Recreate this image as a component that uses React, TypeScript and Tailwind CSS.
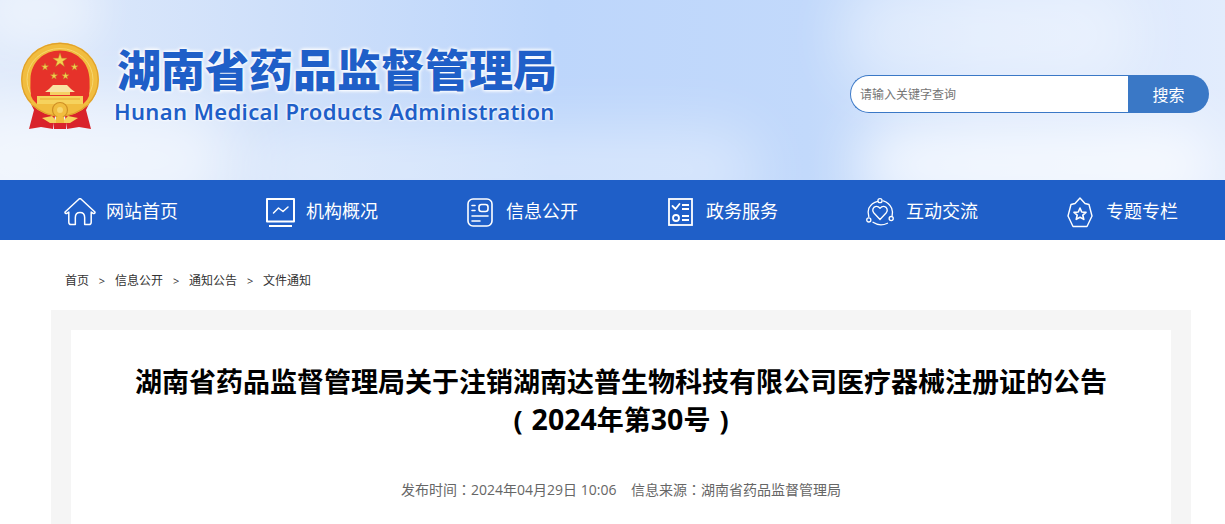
import type { ReactNode } from "react";

const cjk = "font-['Open_Sans','Noto_Sans_CJK_SC',sans-serif]";

const Star = ({ x, y, r }: { x: number; y: number; r: number }) => {
  const pts = Array.from({ length: 10 }, (_, i) => {
    const a = (Math.PI / 5) * i - Math.PI / 2;
    const d = i % 2 === 0 ? r : r * 0.38;
    return `${(x + d * Math.cos(a)).toFixed(2)},${(y + d * Math.sin(a)).toFixed(2)}`;
  }).join(" ");
  return <polygon points={pts} fill="#f5d04e" stroke="#b98a2a" strokeWidth="0.4" />;
};

// national emblem, simplified
const Emblem = () => (
  <svg width="90" height="92" viewBox="0 0 90 92" className="shrink-0">
    {/* ribbons */}
    <path d="M16 66 L19 72 L14 91 L26 89 L38 91 L40 78 L30 68 Z" fill="#d9232b" />
    <path d="M74 66 L71 72 L76 91 L64 89 L52 91 L50 78 L60 68 Z" fill="#d9232b" />
    {/* ring */}
    <ellipse cx="45" cy="41.500" rx="39" ry="37" fill="#f1bd3f" />
    <ellipse cx="45" cy="41.500" rx="38.200" ry="36.200" fill="none" stroke="#e0a02b" strokeWidth="1.200" />
    <ellipse cx="45" cy="41.500" rx="33" ry="31" fill="none" stroke="#f7d66e" strokeWidth="1" />
    {/* red field */}
    <path d="M16 58 Q15 50 15.500 41 C16 24 29 12.500 45 12.500 C61 12.500 74 24 74.500 41 Q75 50 74 58 L70 66 L20 66 Z" fill="#e6322a" />
    <Star x={45} y={22.500} r={7.500} />
    <Star x={30} y={29} r={3.800} />
    <Star x={59.500} y={29} r={3.800} />
    <Star x={39} y={38} r={3.800} />
    <Star x={50.500} y={38} r={3.800} />
    {/* gate */}
    <path d="M38 47 L52 47 L56 51 L60 54 L30 54 L34 51 Z" fill="#f9e2a2" />
    <path d="M35 54 L55 54 L55 57 L35 57 Z" fill="#f5cf64" />
    <path d="M22 58 L68 58 L68 66 L22 66 Z" fill="#f6d25d" />
    <path d="M25 61 L65 61" stroke="#e8a82f" strokeWidth="1" />
    {/* wheel and lower ornament */}
    <path d="M16 66 Q28 72 35 72 L55 72 Q62 72 74 66 L72 62 L68 66 L22 66 L18 62 Z" fill="#f1bd3f" />
    <circle cx="45" cy="72" r="7.500" fill="#f1bd3f" stroke="#cf8f25" strokeWidth="1.200" />
    <circle cx="45" cy="72" r="3" fill="#f7d66e" />
    <path d="M27 80 L37 78 L41 82 L49 82 L53 78 L63 80 L55 85 L35 85 Z" fill="#f6d25d" />
    <path d="M39 85 L51 85 L51 91 L39 91 Z" fill="#d9232b" />
    <path d="M41 79 Q45 76 49 79 L49 85 L41 85 Z" fill="#f1bd3f" />
  </svg>
);

const HomeIcon = () => (
  <svg width="32" height="28" viewBox="0 0 34 30" fill="none" stroke="white" strokeWidth="1.600" strokeLinejoin="round" strokeLinecap="round">
    <path d="M1 15 L16 1 Q17 .4 18 1 L33 15 Q33.500 16.500 31 16.500 L29 15 L29 26 Q29 28.500 26.500 28.500 L22 28.500 L22 21 Q22 15.500 17 15.500 Q12 15.500 12 21 L12 28.500 L7.500 28.500 Q5 28.500 5 26 L5 15 L3 16.500 Q.5 16.500 1 15 Z" />
  </svg>
);

const MonitorIcon = () => (
  <svg width="29" height="29" viewBox="0 0 29 29" fill="none" stroke="white" strokeWidth="2">
    <path d="M1 1 H28 V23.500 H1 Z" strokeLinejoin="round" />
    <path d="M7.500 15 L12.500 10 L17 13.500 L22 9" strokeWidth="1.500" strokeLinecap="round" strokeLinejoin="round" />
    <path d="M3 28 H26" />
  </svg>
);

const InfoIcon = () => (
  <svg width="26" height="29" viewBox="0 0 26 29" fill="none" stroke="white" strokeWidth="1.600" strokeLinecap="round">
    <rect x="1" y="1" width="24" height="27" rx="5" />
    <path d="M5 7.500 H8 M5 12.500 H8 M5 18 H21 M5 23 H13" />
    <rect x="12" y="6.500" width="9" height="7" rx="2.500" />
  </svg>
);

const ListIcon = () => (
  <svg width="25" height="28" viewBox="0 0 25 28" fill="none" stroke="white" strokeWidth="1.800">
    <rect x="1" y="1" width="23" height="26" />
    <path d="M4.500 8 L7.500 11 L11.500 6" strokeLinecap="round" strokeLinejoin="round" />
    <path d="M14 7 H21 M14 11 H21 M14 18 H21 M14 22 H21" />
    <circle cx="8" cy="20" r="3" />
  </svg>
);

const HeartIcon = () => (
  <svg width="28" height="31" viewBox="0 0 30 31" fill="none" stroke="white" strokeWidth="1.400" strokeLinecap="round" strokeLinejoin="round">
    <path d="M15 23 L8.500 16 Q6 13 8.500 10 Q12 7.500 15 11 Q18 7.500 21.500 10 Q24 13 21.500 16 Z" />
    <path d="M12.500 3.500 Q6 5 3 11 Q1.500 15 3 20" />
    <path d="M18.500 3 Q25 5 27.500 11 Q29 15 28 19" />
    <path d="M7.500 26 Q15 31 23 27" />
    <circle cx="15" cy="2.800" r="2.200" />
    <circle cx="3" cy="23.500" r="2.200" />
    <circle cx="27" cy="22" r="2.200" />
  </svg>
);

const BadgeIcon = () => (
  <svg width="26" height="31" viewBox="0 0 26 31" fill="none" stroke="white" strokeWidth="1.400" strokeLinejoin="round">
    <path d="M13 1 L18 6.500 L22 7.500 L25 19 L20 29.500 L6 29.500 L1 19 L4 7.500 L8 6.500 Z" />
    <path d="M13 11 L14.700 15 L19 15.400 L15.800 18.200 L16.800 22.400 L13 20.200 L9.200 22.400 L10.200 18.200 L7 15.400 L11.300 15 Z" strokeWidth="1.600" />
  </svg>
);

const navItems: { label: string; icon: ReactNode }[] = [
  { label: "网站首页", icon: <HomeIcon /> },
  { label: "机构概况", icon: <MonitorIcon /> },
  { label: "信息公开", icon: <InfoIcon /> },
  { label: "政务服务", icon: <ListIcon /> },
  { label: "互动交流", icon: <HeartIcon /> },
  { label: "专题专栏", icon: <BadgeIcon /> },
];

const crumbs = ["首页", "信息公开", "通知公告", "文件通知"];

const Colon = () => <span className="font-['Noto_Sans_CJK_TC',sans-serif]">：</span>;

const App = () => {
  return (
    <div className={`h-screen overflow-hidden bg-white ${cjk}`}>
      {/* Header */}
      <header className="relative flex h-[180px] items-center overflow-hidden bg-[linear-gradient(90deg,#dfeafb_0%,#cfe0fa_22%,#bdd6fb_45%,#c2d9fb_66%,#d6e5fc_80%,#e2ecfd_100%)] pl-[15px] pr-[16px]">
        {/* clouds */}
        <div className="absolute -left-[60px] top-[100px] h-[120px] w-[300px] rounded-full bg-white/60 blur-[30px]" />
        <div className="absolute left-[240px] top-[130px] h-[80px] w-[520px] rounded-full bg-white/40 blur-[30px]" />
        <div className="absolute -left-[20px] -top-[30px] h-[80px] w-[120px] rounded-full bg-white/40 blur-[20px]" />
        <div className="absolute left-[860px] top-[120px] h-[90px] w-[360px] rounded-full bg-white/70 blur-[28px]" />
        <div className="absolute left-[840px] -top-[20px] h-[110px] w-[300px] rounded-full bg-white/40 blur-[30px]" />

        <div className="relative -mt-[12px] flex items-center">
          <Emblem />
          <div className="ml-[12px] flex flex-col">
            <div className="mt-[1px] font-['Noto_Sans_CJK_SC',sans-serif] text-[44px] font-black leading-[48px] text-[#1f5fc8] [text-shadow:0_0_4px_#fff,0_0_4px_#fff,0_0_3px_#fff]">
              湖南省药品监督管理局
            </div>
            <div className="-ml-[3px] mt-[5px] font-['Noto_Sans',sans-serif] text-[22px] font-semibold leading-[28px] tracking-[0.350px] whitespace-nowrap text-[#1f5fc8] [text-shadow:0_0_3px_#fff,0_0_3px_#fff]">
              Hunan Medical Products Administration
            </div>
          </div>
        </div>

        <div className="relative ml-auto mt-[8px] flex h-[38px] w-[359px]">
          <div className="flex flex-1 items-center rounded-l-full border border-r-0 border-[#3a78c6] bg-white pl-[9px] pt-[1px] text-[12px] text-[#757575]">
            请输入关键字查询
          </div>
          <div className="flex w-[81px] items-center justify-center rounded-r-full bg-[#3a78c6] pt-[2px] text-[16px] text-white">
            搜索
          </div>
        </div>
      </header>

      {/* Nav */}
      <nav className="flex h-[60px] items-center bg-[#1f5fc8] pl-[64px]">
        {navItems.map((item) => (
          <div key={item.label} className="flex w-[200px] shrink-0 items-center">
            <div className="mr-[10px] mt-[4px] flex w-[32px] justify-center">{item.icon}</div>
            <span className="mt-[2px] text-[18px] leading-[24px] text-white">{item.label}</span>
          </div>
        ))}
      </nav>

      {/* Breadcrumb */}
      <div className="flex h-[70px] items-center pl-[65px] pt-[12px] text-[12px] text-[#333]">
        {crumbs.map((c, i) => (
          <div key={c} className="flex items-center">
            {i > 0 && <span className="w-[26px] text-center text-[11px]">&gt;</span>}
            <span>{c}</span>
          </div>
        ))}
      </div>

      {/* Article */}
      <main className="mx-[51px] w-[1140px] bg-[#f5f5f5] px-[20px] pt-[20px]">
        <div className="h-[300px] bg-white pt-[32px] text-center">
          <h1 className="text-[27px] font-bold leading-[40px] text-black">
            湖南省药品监督管理局关于注销湖南达普生物科技有限公司医疗器械注册证的公告
            <div className="-mt-[2px] [word-spacing:2px]">
              ( <span className="text-[28.500px] leading-none">2024</span>年第<span className="text-[28.500px] leading-none">30</span>号 )
            </div>
          </h1>
          <p className="mt-[39px] text-[14px] leading-[20px] whitespace-pre text-[#666]">
            发布时间<Colon />2024年04月29日 10:06{"    "}信息来源<Colon />湖南省药品监督管理局
          </p>
        </div>
      </main>
    </div>
  );
};

export default App;
